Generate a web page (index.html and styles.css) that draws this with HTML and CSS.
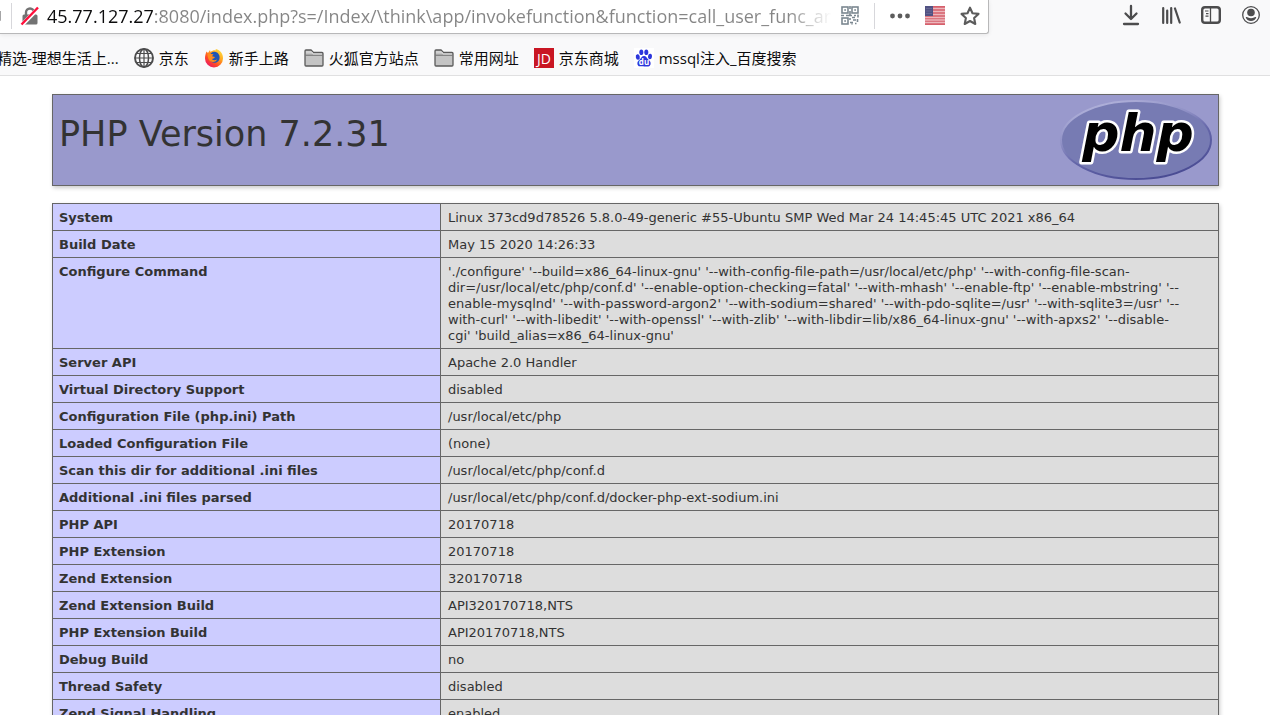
FILE: index.html
```html
<!DOCTYPE html>
<html lang="en">
<head>
<meta charset="utf-8">
<meta name="viewport" content="width=device-width, initial-scale=1">
<title>phpinfo()</title>
<link rel="stylesheet" href="styles.css">
</head>
<body>
<header class="browser">
  <div class="navbar">
    <div class="address">
      <span class="shield-edge"></span>
      <span class="divider"></span>
      <button class="icon-button lock" aria-label="Connection is not secure">
        <svg width="20" height="20" viewBox="0 0 20 20"><path d="M6 10V6.500a4 4 0 0 1 8 0V10" fill="none" stroke="#737373" stroke-width="2.400"/><rect x="2.500" y="8.500" width="15" height="10" rx="1.500" fill="#737373"/><path d="M1.500 19.500 18.500 2" stroke="#fff" stroke-width="4"/><path d="M1.500 18.500 18 1.500" stroke="#ff0f3b" stroke-width="2.400"/></svg>
      </button>
      <input class="url" type="text" aria-label="Address" spellcheck="false" value="45.77.127.27:8080/index.php?s=/Index/\think\app/invokefunction&amp;function=call_user_func_array">
      <button class="icon-button" aria-label="QR code">
        <svg width="18" height="19" viewBox="0 0 18 19" fill="none" stroke="#7b8790" stroke-width="1.600"><rect x="1" y="1" width="6" height="6"/><rect x="11" y="1" width="6" height="6"/><rect x="1" y="12" width="6" height="6"/><path d="M3.200 4h1.800M13.200 4H15M3.200 15H5M9 0v3M9 5v4M0 9.500h3M5 9.500h6M13 9.500h2M17 8.500v3M9 12v2M11 11.500h3M12 14h3M9 16.500h3M14 17.500h1.500M16.500 13v3M10.500 18h1"/></svg>
      </button>
      <span class="divider after-qr"></span>
      <button class="icon-button dots" aria-label="Page actions">
        <svg width="20" height="20" viewBox="0 0 20 20" fill="#5c5c5c"><circle cx="2.500" cy="10" r="2.400"/><circle cx="10" cy="10" r="2.400"/><circle cx="17.500" cy="10" r="2.400"/></svg>
      </button>
      <button class="icon-button flag" aria-label="Server location: United States">
        <svg width="20" height="19" viewBox="0 0 20 19"><path fill="#d6606c" d="M0 0h20v19H0z"/><path d="M8 2.500h12M8 5.500h12M8 8.500h12M0 11.500h20M0 14h20M0 16.500h20" stroke="#ecb6bc" stroke-width="1.300"/><path fill="#515283" d="M0 0h8v10H0z"/><path d="M1.500 2.500h6M1.500 5h6M1.500 7.500h6" stroke="#7d7ca3" stroke-dasharray="1 1"/></svg>
      </button>
      <button class="icon-button" aria-label="Bookmark this page">
        <svg width="20" height="20" viewBox="0 0 20 20"><path d="m10 1.700 2.500 5.500 6 .7-4.400 4.100 1.200 6-5.300-3-5.300 3 1.200-6L1.500 7.900l6-.7z" fill="none" stroke="#5c5c5c" stroke-width="2.100" stroke-linejoin="round"/></svg>
      </button>
    </div>
    <div class="tools">
      <button class="tool" aria-label="Downloads"><svg width="20" height="22" viewBox="0 0 20 22" fill="none" stroke="#4c4c4d" stroke-width="2.300" stroke-linecap="round" stroke-linejoin="round"><path d="M10 2v13M4.500 9.500 10 15l5.500-5.500M3 20h14"/></svg></button>
      <button class="tool" aria-label="Library"><svg width="20" height="22" viewBox="0 0 20 22" fill="none" stroke="#4c4c4d" stroke-width="2.200" stroke-linecap="round"><path d="M2.200 4v15M6.200 6.500V19M10.200 4v15M14 4.500 18.700 18.500"/></svg></button>
      <button class="tool" aria-label="Sidebars"><svg width="20" height="20" viewBox="0 0 20 20" fill="none" stroke="#4c4c4d"><rect x="1.200" y="2.200" width="17.600" height="15.600" rx="2.800" stroke-width="2.400"/><path d="M9.500 2v16" stroke-width="1.300"/><path d="M4 6h3.500M5 8.700h2.500M4.500 11.200h3" stroke-width="1.200"/></svg></button>
      <button class="tool" aria-label="Account"><svg width="20" height="20" viewBox="0 0 20 20"><circle cx="10" cy="10" r="8.300" fill="none" stroke="#4c4c4d" stroke-width="1.300"/><circle cx="10" cy="7.500" r="3.800" fill="#4c4c4d"/><path d="M4.700 12.300c1-.7 1.700-.3 2.300.2 1.800 1.100 4.200 1.100 6 0 .6-.5 1.500-.9 2.300-.2-.5 2.300-2.700 3.700-5.300 3.700s-4.800-1.400-5.300-3.700z" fill="#4c4c4d"/></svg></button>
    </div>
  </div>
  <nav class="bookmarks" aria-label="Bookmarks">
    <a class="bookmark" href="#">精选-理想生活上...</a>
    <a class="bookmark" href="#">
      <svg width="20" height="20" viewBox="0 0 20 20" fill="none" stroke="#4c4c4d" stroke-width="1.500"><circle cx="10" cy="10" r="9" stroke-width="1.900"/><ellipse cx="10" cy="10" rx="4.500" ry="9"/><path d="M10 1v18M1 10h18M2.500 5.500h15M2.500 14.500h15" stroke-width="1.200"/></svg>京东</a>
    <a class="bookmark" href="#">
      <svg width="20" height="20" viewBox="0 0 20 20"><defs><linearGradient id="fox" x1="1" y1="0" x2="0.200" y2="1"><stop offset="0" stop-color="#fff04a"/><stop offset=".4" stop-color="#ffa51e"/><stop offset=".7" stop-color="#ff4a26"/><stop offset="1" stop-color="#e8146b"/></linearGradient></defs><path d="M2.500 3.500 4 5l2-3 .5 2C8 2.500 10 2 12 2.300L11.500 1c5 1 7.700 5 7.500 9.500a9 9 0 0 1-18 0c0-3 .7-5 1.500-7z" fill="url(#fox)"/><path d="M5.500 8C6 4.500 10 2.500 13 4.500c3 2 3.500 6.500 1 9-3 2.500-7.500 1-8.500-2z" fill="#1e55b5"/><path d="M3.500 5 7 6l2.500.2-1.500 2 3 .8c-1 1.500-2 1.600-3 2 1 1.500 3 1.500 5 .5-1.500 3.500-6.500 3-8 .5C4 10 3.300 7.500 3.500 5z" fill="#ff8b1c"/></svg>新手上路</a>
    <a class="bookmark" href="#">
      <svg width="20" height="20" viewBox="0 0 20 20"><path d="M1 17V3q0-1 1-1h5l2.500 2.500H18q1 0 1 1V17q0 1-1 1H2q-1 0-1-1z" fill="#c4c4c4" stroke="#5b5b5b" stroke-width="1.300"/><path d="M1.500 7.200h17" stroke="#686868"/><path d="M2 4h6l1 2h9" fill="none" stroke="#dedede"/></svg>火狐官方站点</a>
    <a class="bookmark" href="#">
      <svg width="20" height="20" viewBox="0 0 20 20"><path d="M1 17V3q0-1 1-1h5l2.500 2.500H18q1 0 1 1V17q0 1-1 1H2q-1 0-1-1z" fill="#c4c4c4" stroke="#5b5b5b" stroke-width="1.300"/><path d="M1.500 7.200h17" stroke="#686868"/><path d="M2 4h6l1 2h9" fill="none" stroke="#dedede"/></svg>常用网址</a>
    <a class="bookmark" href="#">
      <svg width="20" height="20" viewBox="0 0 20 20"><path fill="#c91623" d="M0 0h20v20H0z"/><text class="jd" x="10" y="16" text-anchor="middle">JD</text></svg>京东商城</a>
    <a class="bookmark" href="#">
      <svg width="20" height="20" viewBox="0 0 20 20"><path fill="#fff" d="M0 0h20v20H0z"/><g fill="#2b35dc"><ellipse cx="3.800" cy="9" rx="2" ry="2.700" transform="rotate(-12 3.800 9)"/><ellipse cx="7.300" cy="4.300" rx="2" ry="2.800"/><ellipse cx="12.300" cy="4.300" rx="2" ry="2.800"/><ellipse cx="16" cy="8.500" rx="2" ry="2.700" transform="rotate(12 16 8.500)"/><path d="M10 8c2.200 0 2.800 2.200 4.500 3.700 1.600 1.400 2.500 2.700 2 4.700-.7 2.600-3.300 2.200-6.500 2s-5.800.6-6.500-2c-.5-2 .4-3.300 2-4.700C7.200 10.200 7.800 8 10 8z"/></g><text class="du" x="10" y="17" text-anchor="middle">du</text></svg>mssql注入_百度搜索</a>
  </nav>
</header>
<main class="page">
  <section class="banner">
    <h1>PHP Version 7.2.31</h1>
    <svg class="logo" width="152" height="82" viewBox="0 0 152 82" role="img" aria-label="PHP logo">
      <defs><linearGradient id="rim" x1="0.200" y1="0" x2="0.700" y2="1"><stop offset="0" stop-color="#b4b5dc"/><stop offset=".35" stop-color="#9091c6"/><stop offset=".6" stop-color="#6365a8"/><stop offset="1" stop-color="#484a92"/></linearGradient></defs>
      <ellipse cx="76" cy="41" rx="75" ry="39" fill="#777bb3" stroke="url(#rim)" stroke-width="2"/>
      <text class="php" x="78" y="52" text-anchor="middle">php</text>
    </svg>
  </section>
  <table class="info">
    <tbody>
      <tr><th scope="row">System</th><td>Linux 373cd9d78526 5.8.0-49-generic #55-Ubuntu SMP Wed Mar 24 14:45:45 UTC 2021 x86_64</td></tr>
      <tr><th scope="row">Build Date</th><td>May 15 2020 14:26:33</td></tr>
      <tr><th scope="row">Configure Command</th><td>'./configure' '--build=x86_64-linux-gnu' '--with-config-file-path=/usr/local/etc/php' '--with-config-file-scan-<br>dir=/usr/local/etc/php/conf.d' '--enable-option-checking=fatal' '--with-mhash' '--enable-ftp' '--enable-mbstring' '--<br>enable-mysqlnd' '--with-password-argon2' '--with-sodium=shared' '--with-pdo-sqlite=/usr' '--with-sqlite3=/usr' '--<br>with-curl' '--with-libedit' '--with-openssl' '--with-zlib' '--with-libdir=lib/x86_64-linux-gnu' '--with-apxs2' '--disable-<br>cgi' 'build_alias=x86_64-linux-gnu'</td></tr>
      <tr><th scope="row">Server API</th><td>Apache 2.0 Handler</td></tr>
      <tr><th scope="row">Virtual Directory Support</th><td>disabled</td></tr>
      <tr><th scope="row">Configuration File (php.ini) Path</th><td>/usr/local/etc/php</td></tr>
      <tr><th scope="row">Loaded Configuration File</th><td>(none)</td></tr>
      <tr><th scope="row">Scan this dir for additional .ini files</th><td>/usr/local/etc/php/conf.d</td></tr>
      <tr><th scope="row">Additional .ini files parsed</th><td>/usr/local/etc/php/conf.d/docker-php-ext-sodium.ini</td></tr>
      <tr><th scope="row">PHP API</th><td>20170718</td></tr>
      <tr><th scope="row">PHP Extension</th><td>20170718</td></tr>
      <tr><th scope="row">Zend Extension</th><td>320170718</td></tr>
      <tr><th scope="row">Zend Extension Build</th><td>API320170718,NTS</td></tr>
      <tr><th scope="row">PHP Extension Build</th><td>API20170718,NTS</td></tr>
      <tr><th scope="row">Debug Build</th><td>no</td></tr>
      <tr><th scope="row">Thread Safety</th><td>disabled</td></tr>
      <tr><th scope="row">Zend Signal Handling</th><td>enabled</td></tr>
    </tbody>
  </table>
</main>
</body>
</html>
```
FILE: styles.css
```css
* { box-sizing: border-box; }

body {
  margin: 0;
  height: 100vh;
  display: flex;
  flex-direction: column;
  background: #fff;
  color: #333;
  font-family: Verdana, "DejaVu Sans", sans-serif;
}

button {
  padding: 0;
  border: 0;
  background: none;
}

svg { display: block; flex: none; }

/* Browser toolbar */
.browser {
  flex: none;
  background: #f9f9fa;
  border-bottom: 1px solid #e0e0e1;
  overflow: hidden;
}

.navbar {
  display: flex;
  justify-content: space-between;
  gap: 122px;
  height: 40px;
  margin-right: -1px;
}

.address {
  flex: 1;
  min-width: 0;
  display: flex;
  align-items: center;
  height: 34px;
  padding: 0 8px 2px 0;
  background: #fff;
  border-right: 1px solid #b8b8b9;
  border-bottom: 1px solid #b8b8b9;
  border-radius: 0 0 3px 0;
  box-shadow: 0 1px 4px rgba(0, 0, 0, 0.08);
}

.shield-edge {
  width: 1px;
  height: 10px;
  margin-right: 10px;
  background: #a5a5a6;
  border-radius: 0 0 2px 0;
}

.divider {
  flex: none;
  width: 1px;
  height: 26px;
  background: #d7d7db;
}

.icon-button { flex: none; }

.lock { margin: 0 7px 0 8px; }

.after-qr { margin: 0 15px; }

.dots { margin-right: 15px; }

.flag { margin-right: 15px; }

.url {
  flex: 1;
  min-width: 0;
  height: 30px;
  margin-right: 9px;
  padding: 0;
  border: 0;
  outline: 0;
  font: 18px/26px "Open Sans", sans-serif;
  color: transparent;
  background: linear-gradient(to right, #0c0c0d 107px, #858585 107px, #858585 calc(100% - 45px), rgba(133, 133, 133, 0));
  -webkit-background-clip: text;
  background-clip: text;
}

.tools { display: flex; }

.tool {
  display: flex;
  align-items: center;
  justify-content: center;
  width: 40px;
  height: 30px;
}

/* Bookmarks bar */
.bookmarks {
  display: flex;
  align-items: center;
  gap: 15px;
  height: 35px;
  margin-left: -3px;
}

.bookmark {
  display: flex;
  align-items: center;
  gap: 5px;
  color: #0c0c0d;
  font: 15px/20px "Open Sans", "Noto Sans CJK SC", sans-serif;
  text-decoration: none;
  white-space: nowrap;
}

.jd { fill: #fff; font: 14px "Open Sans", sans-serif; }

.du { fill: #fff; font: bold 8px "Open Sans", sans-serif; }

/* phpinfo page */
.page {
  flex: 1;
  min-height: 0;
  padding: 18px 51px 0 52px;
  overflow-y: auto;
  scrollbar-width: none;
}

.banner {
  display: flex;
  justify-content: space-between;
  align-items: flex-start;
  margin-bottom: 17px;
  padding: 4px 6px;
  background: #99c;
  border: 1px solid #666;
  box-shadow: 1px 2px 4px #ccc;
}

.banner h1 {
  margin: 14px 0 0;
  font-size: 35px;
  font-weight: 400;
  line-height: 42px;
}

.php {
  fill: #000;
  stroke: #fff;
  stroke-width: 5px;
  stroke-linejoin: round;
  paint-order: stroke;
  font: italic 700 52px "DejaVu Sans", sans-serif;
}

.info {
  width: 100%;
  border-collapse: collapse;
  box-shadow: 1px 2px 4px #ccc;
  font-size: 13px;
  line-height: 16px;
}

.info th,
.info td {
  padding: 6px 6px 4px;
  border: 1px solid #666;
  text-align: left;
  vertical-align: top;
}

.info th {
  width: 388px;
  background: #ccf;
}

.info td {
  padding-left: 7px;
  background: #ddd;
  overflow-wrap: anywhere;
}
```
